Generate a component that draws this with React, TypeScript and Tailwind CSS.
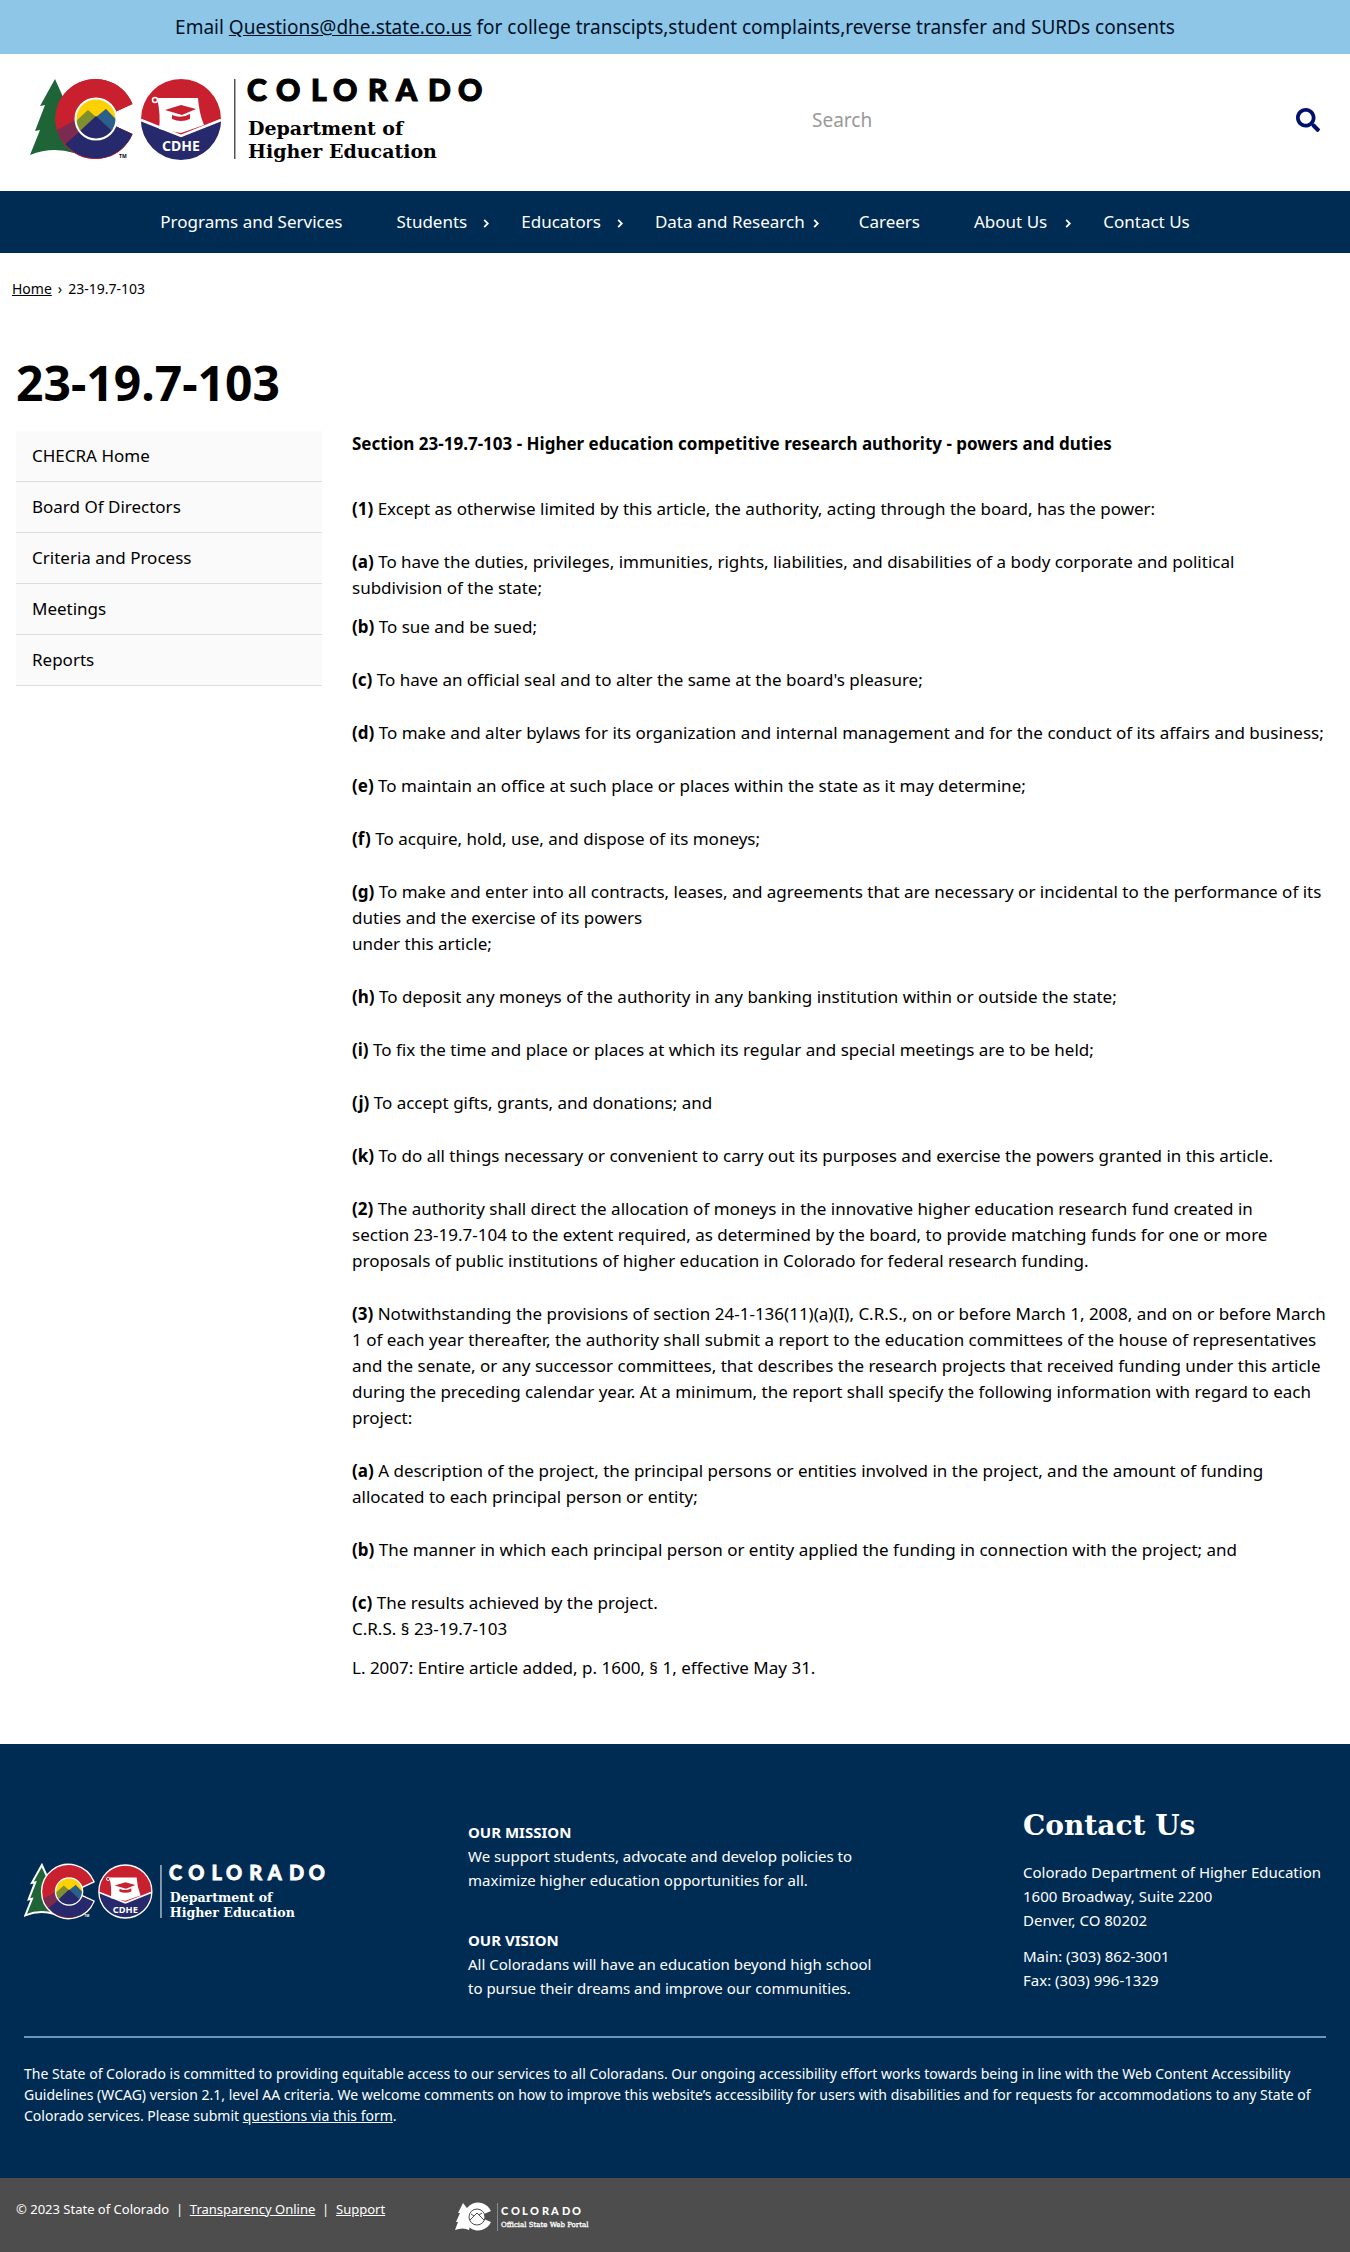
import React from "react";

function CMark({ outline }: { outline?: boolean }) {
  const edge = outline ? "#ffffff" : "none";
  return (
    <g>
      <path
        d="M25 0 L10 27 L15 26 L5 52 L10 51 L0 76 Q22 67 44 74 L60 60 L60 30 L33 18 Z"
        fill="#1f6437"
        stroke={edge}
        strokeWidth="3"
      />
      <path d="M102.500 25 A40 40 0 1 0 102.500 55 L85 47 A20 20 0 1 1 85 33 Z" fill="#c8202f" stroke={edge} strokeWidth="4" />
      <path d="M102.500 25 A40 40 0 1 0 102.500 55 L85 47 A20 20 0 1 1 85 33 Z" fill="#c8202f" />
      <path d="M35 65 L50 52 Q58 62 70 60 Q81 57 85 47 L102.500 55 A40 40 0 0 1 35 65 Z" fill="#262a6c" />
      <path d="M27 51 Q29 59 35 65 L50 51 L46 43 L44 42 Z" fill="#7b2a50" />
      <circle cx="66" cy="40" r="20" fill="#ffd100" />
      <path d="M46 42 L58 31 L66 38 L76 30 L86 40 A20 20 0 0 1 46 42 Z" fill="#7d8f2e" />
      <path d="M64 40 L76 30 L86 41 L82 53 L66 38 Z" fill="#2b5f8c" />
      <path d="M50 52 L66 37 L82 52 A20 20 0 0 1 50 52 Z" fill="#262a6c" />
      <circle cx="66" cy="40" r="20.500" fill="none" stroke="#ffffff" strokeWidth="2" />
    </g>
  );
}

function Logo({ className, light }: { className: string; light?: boolean }) {
  const ink = light ? "#ffffff" : "#000000";
  return (
    <svg viewBox="-2 -9 480 98" className={className} role="img" aria-label="Colorado Department of Higher Education">
      <CMark outline={light} />
      <text x="89" y="79" fontFamily="Open Sans" fontSize="5" fontWeight="700" fill={ink}>TM</text>
      <circle cx="151" cy="40" r="40" fill="#c8202f" />
      <path d="M111 41 L151 57 L191 41 A40 40 0 0 1 111 41 Z" fill="#262a6c" />
      <path d="M111 41 L151 57 L191 41" fill="none" stroke="#ffffff" strokeWidth="2.500" />
      <path d="M127 19 L168 19 Q169 34 174 46 L151 54 L129 50 Q131 36 127 19 Z" fill="#ffffff" />
      <circle cx="125" cy="21" r="2.500" fill="none" stroke="#ffffff" strokeWidth="1.500" />
      <path d="M135 31 L151 26 L166 30 L152 36 Z" fill="#c8202f" />
      <path d="M142 36 Q151 40 160 35 L160 40 Q151 44 142 40 Z" fill="#c8202f" />
      {light && <circle cx="151" cy="40" r="40" fill="none" stroke="#ffffff" strokeWidth="2" />}
      <text x="151" y="72" textAnchor="middle" fontFamily="Noto Sans" fontSize="14" fontWeight="700" fill="#ffffff">CDHE</text>
      <rect x="204" y="0" width="1.500" height="80" fill={light ? "#ffffff" : "#555555"} />
      <text x="217 246 281 303 338 366 398 428" y="22" fontFamily="Lato" fontSize="30" fontWeight="900" fill={ink} stroke={ink} strokeWidth="1.200">
        COLORADO
      </text>
      <text x="218" y="56" fontFamily="DejaVu Serif" fontSize="19" fontWeight="700" fill={ink}>Department of</text>
      <text x="218" y="79" fontFamily="DejaVu Serif" fontSize="19" fontWeight="700" fill={ink}>Higher Education</text>
    </svg>
  );
}

function PortalLogo() {
  return (
    <svg viewBox="0 0 150 30" className="h-[30px] w-[150px]" role="img" aria-label="Colorado Official State Web Portal">
      <path d="M8 1 L3 11 L5 11 L1 20 L3 20 L0 28 Q8 25 14 28 L18 14 Z" fill="#ffffff" />
      <path d="M36 9 A14 14 0 1 0 36 20 L29 17 A7 7 0 1 1 29 12 Z" fill="#ffffff" />
      <circle cx="22" cy="15" r="8" fill="#ffffff" stroke="#4d4d4d" strokeWidth="1" />
      <path d="M15 18 L22 11 L29 18 M19 14 L16 12 M24 13 L27 11" fill="none" stroke="#4d4d4d" strokeWidth="1" />
      <rect x="42" y="1" width="1" height="28" fill="#8a8a8a" />
      <text x="46 56 67 75 87 96 107 117" y="13" fontFamily="Lato" fontSize="11" fontWeight="900" fill="#ffffff">COLORADO</text>
      <text x="46" y="25" fontFamily="DejaVu Serif" fontSize="7" fontWeight="400" fill="#ffffff" stroke="#ffffff" strokeWidth="0.300">
        Official State Web Portal
      </text>
    </svg>
  );
}

const nav = [
  { label: "Programs and Services", cls: "" },
  { label: "Students", cls: "ml-[54px]", arrow: "ml-4" },
  { label: "Educators", cls: "ml-8", arrow: "ml-4" },
  { label: "Data and Research", cls: "ml-8", arrow: "ml-2" },
  { label: "Careers", cls: "ml-10" },
  { label: "About Us", cls: "ml-[54px]", arrow: "ml-[18px]" },
  { label: "Contact Us", cls: "ml-8" },
];

const side = ["CHECRA Home", "Board Of Directors", "Criteria and Process", "Meetings", "Reports"];

const clauses: { mark: string; lines: string[]; tight?: boolean }[] = [
  { mark: "(1)", lines: ["Except as otherwise limited by this article, the authority, acting through the board, has the power:"] },
  {
    mark: "(a)",
    lines: [
      "To have the duties, privileges, immunities, rights, liabilities, and disabilities of a body corporate and political",
      "subdivision of the state;",
    ],
    tight: true,
  },
  { mark: "(b)", lines: ["To sue and be sued;"] },
  { mark: "(c)", lines: ["To have an official seal and to alter the same at the board's pleasure;"] },
  { mark: "(d)", lines: ["To make and alter bylaws for its organization and internal management and for the conduct of its affairs and business;"] },
  { mark: "(e)", lines: ["To maintain an office at such place or places within the state as it may determine;"] },
  { mark: "(f)", lines: ["To acquire, hold, use, and dispose of its moneys;"] },
  {
    mark: "(g)",
    lines: [
      "To make and enter into all contracts, leases, and agreements that are necessary or incidental to the performance of its duties and the exercise of its powers",
      "under this article;",
    ],
  },
  { mark: "(h)", lines: ["To deposit any moneys of the authority in any banking institution within or outside the state;"] },
  { mark: "(i)", lines: ["To fix the time and place or places at which its regular and special meetings are to be held;"] },
  { mark: "(j)", lines: ["To accept gifts, grants, and donations; and"] },
  { mark: "(k)", lines: ["To do all things necessary or convenient to carry out its purposes and exercise the powers granted in this article."] },
  {
    mark: "(2)",
    lines: [
      "The authority shall direct the allocation of moneys in the innovative higher education research fund created in",
      "section 23-19.7-104 to the extent required, as determined by the board, to provide matching funds for one or more proposals of public institutions of higher education in Colorado for federal research funding.",
    ],
  },
  {
    mark: "(3)",
    lines: [
      "Notwithstanding the provisions of section 24-1-136(11)(a)(I), C.R.S., on or before March 1, 2008, and on or before March 1 of each year thereafter, the authority shall submit a report to the education committees of the house of representatives and the senate, or any successor committees, that describes the research projects that received funding under this article during the preceding calendar year. At a minimum, the report shall specify the following information with regard to each project:",
    ],
  },
  {
    mark: "(a)",
    lines: ["A description of the project, the principal persons or entities involved in the project, and the amount of funding allocated to each principal person or entity;"],
  },
  { mark: "(b)", lines: ["The manner in which each principal person or entity applied the funding in connection with the project; and"] },
  { mark: "(c)", lines: ["The results achieved by the project.", "C.R.S. § 23-19.7-103"], tight: true },
];

export default function App() {
  return (
    <div className="bg-white font-['Noto_Sans',sans-serif] text-black">
      <div className="bg-[#8dc6e6] px-4 py-[13px] text-center text-[19px] leading-7 text-[#001028]">
        Email{" "}
        <a href="mailto:Questions@dhe.state.co.us" className="underline">
          Questions@dhe.state.co.us
        </a>{" "}
        for college transcipts,student complaints,reverse transfer and SURDs consents
      </div>

      <header className="flex items-start justify-between px-7 pt-4 pb-[23px]">
        <a href="#home">
          <Logo className="h-[98px] w-[480px]" />
        </a>
        <form className="mt-[34px] flex w-[510px] items-center" onSubmit={(e) => e.preventDefault()}>
          <input
            type="search"
            aria-label="Search"
            placeholder="Search"
            className="h-8 min-w-0 flex-1 bg-transparent text-[19px] outline-none placeholder:text-[#999999]"
          />
          <button type="submit" aria-label="Submit search" className="mr-0.5 text-[#00106e]">
            <svg viewBox="0 0 512 512" className="h-6 w-6" fill="currentColor">
              <path d="M505 442.700 405.300 343c-4.500-4.500-10.600-7-17-7H372c27.600-35.300 44-79.700 44-128C416 93.100 322.900 0 208 0S0 93.100 0 208s93.100 208 208 208c48.300 0 92.700-16.400 128-44v16.300c0 6.400 2.500 12.500 7 17l99.700 99.700c9.400 9.400 24.600 9.400 33.900 0l28.300-28.300c9.400-9.400 9.400-24.600.1-34zM208 336c-70.700 0-128-57.200-128-128 0-70.700 57.200-128 128-128 70.700 0 128 57.200 128 128 0 70.700-57.200 128-128 128z" />
            </svg>
          </button>
        </form>
      </header>

      <nav className="flex justify-center bg-[#002c54] py-[18px] text-[17px] leading-[26px] text-white" aria-label="Main">
        <ul className="flex">
          {nav.map((n) => (
            <li key={n.label} className={n.cls}>
              <a href="#nav" className="flex items-center">
                {n.label}
                {n.arrow && (
                  <svg viewBox="0 0 6 10" className={`${n.arrow} mt-0.5 h-[9px] w-[6px]`} fill="none" stroke="currentColor" strokeWidth="2">
                    <path d="M1 1 L5 5 L1 9" />
                  </svg>
                )}
              </a>
            </li>
          ))}
        </ul>
      </nav>

      <nav className="flex gap-1.5 px-3 pt-[25px] text-sm leading-[22px]" aria-label="Breadcrumb">
        <a href="#home" className="underline">
          Home
        </a>
        <span>›</span>
        <span>23-19.7-103</span>
      </nav>

      <h1 className="px-4 pt-[53px] text-5xl leading-[60px] font-bold">23-19.7-103</h1>

      <div className="flex items-start gap-[30px] pr-3 pb-[63px] pl-4">
        <ul className="mt-[18px] w-[306px] shrink-0 bg-[#fafafa]">
          {side.map((s) => (
            <li key={s} className="border-b border-[#dddddd] px-4 py-[13px] text-[17px] leading-6">
              <a href="#section">{s}</a>
            </li>
          ))}
        </ul>

        <main className="mt-[18px] min-w-0 flex-1 text-[17px] leading-[26px]">
          <h2 className="mb-[39px] font-bold">Section 23-19.7-103 - Higher education competitive research authority - powers and duties</h2>
          {clauses.map((c, i) => (
            <p key={i} className={c.tight ? "mb-[13px]" : "mb-[27px]"}>
              <b>{c.mark}</b>{" "}
              {c.lines.map((l, j) => (
                <React.Fragment key={j}>
                  {j > 0 && <br />}
                  {l}
                </React.Fragment>
              ))}
            </p>
          ))}
          <p>L. 2007: Entire article added, p. 1600, § 1, effective May 31.</p>
        </main>
      </div>

      <footer className="text-white">
        <div className="bg-[#002c54] px-6 pt-[62px] pb-[52px]">
          <div className="flex items-start pb-9">
            <div className="w-[444px] shrink-0 pt-[53px]">
              <Logo light className="h-[65px] w-[318px]" />
            </div>
            <div className="w-[555px] shrink-0 pt-[14px] text-[15px] leading-6">
              <h3 className="font-bold">OUR MISSION</h3>
              <p className="mb-9">
                We support students, advocate and develop policies to
                <br />
                maximize higher education opportunities for all.
              </p>
              <h3 className="font-bold">OUR VISION</h3>
              <p>
                All Coloradans will have an education beyond high school
                <br />
                to pursue their dreams and improve our communities.
              </p>
            </div>
            <div className="text-[15px] leading-6">
              <h2 className="mb-[14px] font-['DejaVu_Serif',serif] text-[28px] leading-10 font-bold">Contact Us</h2>
              <p className="mb-3">
                Colorado Department of Higher Education
                <br />
                1600 Broadway, Suite 2200
                <br />
                Denver, CO 80202
              </p>
              <p>
                Main: (303) 862-3001
                <br />
                Fax: (303) 996-1329
              </p>
            </div>
          </div>
          <p className="border-t-2 border-[#6f94b8] pt-[25px] text-sm leading-[21px]">
            The State of Colorado is committed to providing equitable access to our services to all Coloradans. Our ongoing accessibility effort works towards being in line with the Web Content Accessibility Guidelines (WCAG) version 2.1, level AA criteria. We welcome comments on how to improve this website’s accessibility for users with disabilities and for requests for accommodations to any State of Colorado services. Please submit{" "}
            <a href="#form" className="underline">
              questions via this form
            </a>
            .
          </p>
        </div>
        <div className="flex items-start bg-[#4d4d4d] px-4 py-5 text-[13px] leading-[22px]">
          <p className="w-[439px] shrink-0">
            © 2023 State of Colorado &nbsp;|&nbsp;{" "}
            <a href="#top" className="underline">
              Transparency Online
            </a>{" "}
            &nbsp;|&nbsp;{" "}
            <a href="#support" className="underline">
              Support
            </a>
          </p>
          <div className="pt-1">
            <PortalLogo />
          </div>
        </div>
      </footer>
    </div>
  );
}
